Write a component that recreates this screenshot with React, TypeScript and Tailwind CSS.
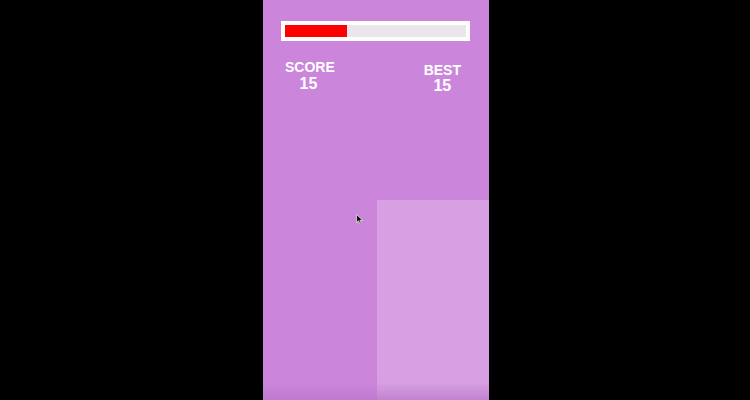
export default function App() {
  const score = 15;
  const best = 15;
  const timeLeft = 0.34;

  return (
    <div className="w-[750px] h-[400px] bg-black flex justify-center overflow-hidden font-['Liberation_Sans',Arial,sans-serif]">
      <div className="relative w-[226px] h-[400px] ml-[2px] bg-[#cb86dc] overflow-hidden">
        {/* block */}
        <div className="absolute left-[114px] top-[200px] w-[112px] h-[200px] bg-[#d8a0e2]" />
        {/* bottom shade */}
        <div className="absolute left-0 bottom-0 w-full h-[18px] bg-gradient-to-b from-transparent to-[#b976c9]/70" />

        <div className="relative flex flex-col">
          <div className="mt-[21px] ml-[18px] w-[189px] h-[20px] bg-white p-[4px]">
            <div className="w-full h-full bg-[#ebe6eb]">
              <div className="h-full bg-[#ff0000]" style={{ width: `${timeLeft * 100}%` }} />
            </div>
          </div>

          <div className="flex justify-between items-start pl-[22px] pr-[28px] mt-[19px] text-white font-bold">
            <div className="flex flex-col items-center leading-none">
              <span className="text-[14px]">SCORE</span>
              <span className="text-[16px] mt-[2px] -ml-[3px]">{score}</span>
            </div>
            <div className="flex flex-col items-center leading-none mt-[2.5px]">
              <span className="text-[14px]">BEST</span>
              <span className="text-[16px] mt-[1.5px]">{best}</span>
            </div>
          </div>
        </div>

        {/* cursor */}
        <svg className="absolute left-[93px] top-[214px]" width="8" height="11" viewBox="0 0 8 11">
          <path d="M0.5 0.5 L0.5 8.5 L2.5 6.8 L4 10 L5.3 9.4 L3.9 6.3 L6.6 6.3 Z" fill="#111" stroke="#eee" strokeWidth="0.7" />
        </svg>
      </div>
    </div>
  );
}
